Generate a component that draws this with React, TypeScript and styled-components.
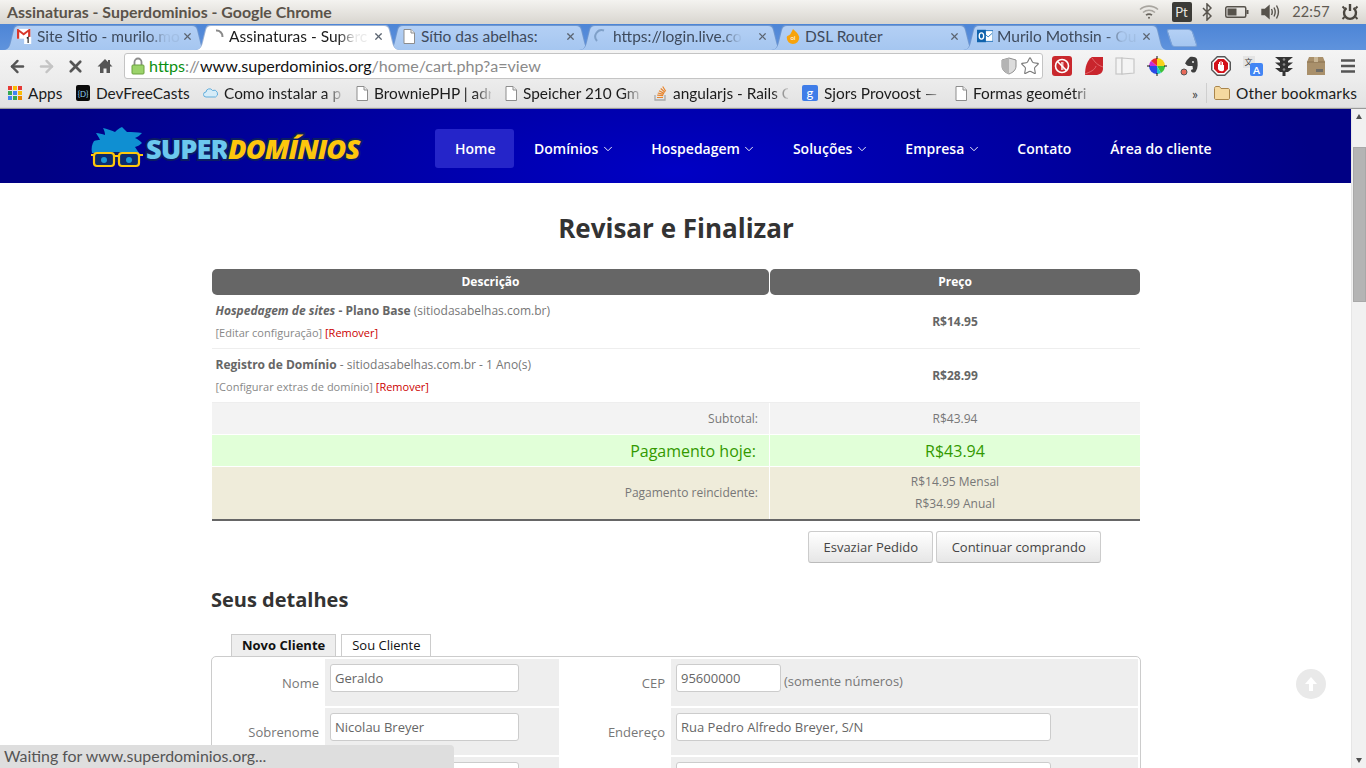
import React from 'react';
import styled, { createGlobalStyle } from 'styled-components';
import { ArrowLeft, ArrowRight, X, Star, ChevronDown } from 'lucide-react';

const GlobalStyle = createGlobalStyle`
  html, body { margin: 0; padding: 0; height: 768px; overflow: hidden; background: #fff; }
  * { box-sizing: border-box; }
`;

const UI_FONT = `Lato, "Noto Sans", sans-serif`;
const PAGE_FONT = `"Open Sans", "Noto Sans", sans-serif`;

/* ---------- janela ---------- */
const Screen = styled.div`
  position: relative;
  width: 1366px;
  height: 768px;
  overflow: hidden;
  display: flex;
  flex-direction: column;
  font-family: ${PAGE_FONT};
`;

const TitleBar = styled.div`
  height: 24px;
  flex: none;
  display: flex;
  align-items: center;
  padding: 0 7px 1px;
  background: linear-gradient(#f4f3f0, #d8d5cf);
  font: bold 15.9px ${UI_FONT};
  color: #5a534a;
`;

const Tray = styled.div`
  margin-left: auto;
  display: flex;
  align-items: center;
  height: 24px;
`;

const TraySlot = styled.span<{ $w: number }>`
  width: ${p => p.$w}px;
  display: flex;
  justify-content: center;
  align-items: center;
`;

const PtBadge = styled.span`
  width: 20px;
  height: 20px;
  background: #3c3b37;
  color: #e8e6e0;
  border-radius: 2px;
  display: flex;
  align-items: center;
  justify-content: center;
  font: 13px ${UI_FONT};
`;

const Clock = styled.span`
  font: 14.5px ${UI_FONT};
  color: #5f5a52;
`;

/* ---------- abas ---------- */
const TabStrip = styled.div`
  height: 26px;
  flex: none;
  display: flex;
  align-items: flex-end;
  padding-left: 3px;
  background: linear-gradient(#4d85d6, #5f93dd);
`;

const TAB_OUTER = `path('M0 25 C5 25 6 22 7 17 L10 5 C11 1 12 0 16 0 L189 0 C193 0 194 1 195 5 L198 17 C199 22 200 25 205 25 Z')`;
const TAB_INNER = `path('M1 25 C6 24 7 21 8 17 L11 5 C12 2 13 1 16 1 L189 1 C192 1 193 2 194 5 L197 17 C198 21 199 24 204 25 Z')`;

const Tab = styled.div<{ $active?: boolean }>`
  position: relative;
  width: 205px;
  height: 25px;
  margin-right: -13px;
  flex: none;
  clip-path: ${TAB_OUTER};
  background: ${p => (p.$active ? '#9db4d6' : '#6f97cf')};
  z-index: ${p => (p.$active ? 2 : 1)};
  font: 15.5px ${UI_FONT};
  color: ${p => (p.$active ? '#1c1c1c' : '#3e4a5c')};
  display: flex;
  align-items: center;
  padding: 0 15px 3px 14px;

  &::before {
    content: '';
    position: absolute;
    inset: 0;
    clip-path: ${TAB_INNER};
    background: ${p => (p.$active ? '#fff' : 'linear-gradient(#b4d0f5, #a5c6f0)')};
  }
  & > * { position: relative; }
`;

const TabIcon = styled.span`
  width: 16px;
  height: 16px;
  flex: none;
  display: flex;
  align-items: center;
  justify-content: center;
`;

const TabLabel = styled.span<{ $gap?: number; $fade?: boolean }>`
  flex: 1;
  margin-left: ${p => p.$gap ?? 4}px;
  white-space: nowrap;
  ${p => p.$fade && 'mask-image: linear-gradient(90deg, #000 78%, rgba(0,0,0,.1) 90%);'}
`;

const TabClose = styled.span`
  width: 14px;
  display: flex;
  justify-content: center;
  color: #5b6470;
  margin-left: 2px;
`;

const NewTab = styled.div`
  width: 26px;
  height: 18px;
  margin: 0 0 3px 14px;
  flex: none;
  background: linear-gradient(#b4d0f5, #a5c6f0);
  border: 1px solid #7ea3d6;
  border-radius: 3px 4px 3px 3px;
  transform: skewX(18deg);
`;

/* ---------- barra de ferramentas ---------- */
const Toolbar = styled.div`
  height: 31px;
  flex: none;
  display: flex;
  align-items: center;
  background: linear-gradient(#f4f4f4, #ececec);
  padding: 3px 0 2px 3px;
`;

const NavBtn = styled.span<{ $w?: number }>`
  width: ${p => p.$w ?? 29}px;
  display: flex;
  justify-content: center;
  align-items: center;
  flex: none;
`;

const Omnibox = styled.div`
  width: 919px;
  height: 26px;
  margin-left: 5px;
  flex: none;
  background: #fff;
  border: 1px solid #c4c4c4;
  border-radius: 3px;
  display: flex;
  align-items: center;
  padding: 0 2px 0 6px;
  font: 16.13px ${UI_FONT};
`;

const Scheme = styled.span`color: #0b8f12;`;
const UrlDim = styled.span`color: #8a8a8a;`;
const UrlHost = styled.span`color: #111;`;

const UrlText = styled.span`
  margin-left: 4px;
  margin-top: -2px;
  white-space: nowrap;
`;

const OmniRight = styled.span`
  margin-left: auto;
  display: flex;
  align-items: center;
  gap: 3px;
`;

const Extensions = styled.div`
  display: flex;
  align-items: center;
  margin-left: 3px;
`;

const ExtSlot = styled.span`
  width: 31.8px;
  height: 24px;
  flex: none;
  display: flex;
  justify-content: center;
  align-items: center;
`;

/* ---------- favoritos ---------- */
const BookmarksBar = styled.div`
  height: 28px;
  flex: none;
  display: flex;
  align-items: center;
  gap: 14px;
  padding: 0 8px 3px;
  background: linear-gradient(#ececec, #e2e2e2);
  border-bottom: 1px solid #9a9a9a;
  font: 15.4px ${UI_FONT};
  color: #1c1c1c;
  box-shadow: inset 0 -1px 0 #d6d6d6;
`;

const Bookmark = styled.span`
  display: flex;
  align-items: center;
  gap: 6px;
  flex: none;
`;

const BookmarkText = styled.span<{ $w: number; $fade?: boolean; $track?: number }>`
  width: ${p => p.$w}px;
  white-space: nowrap;
  letter-spacing: ${p => p.$track ?? 0}px;
  ${p => p.$fade && 'mask-image: linear-gradient(90deg, #000 86%, rgba(0,0,0,.15));'}
`;

const BookmarkEnd = styled.span`
  margin-left: auto;
  display: flex;
  align-items: center;
`;

const Chevrons = styled.span`
  font: 14px ${UI_FONT};
  color: #444;
  margin-right: 8px;
`;

const BarSeparator = styled.span`
  width: 1px;
  height: 20px;
  background: #cfcfcf;
  margin-right: 7px;
`;

/* ---------- area da pagina ---------- */
const Viewport = styled.div`
  flex: 1;
  min-height: 0;
  display: flex;
`;

const Page = styled.div`
  flex: 1;
  min-width: 0;
  overflow: hidden;
  background: #fff;
`;

const Scrollbar = styled.div`
  width: 15px;
  flex: none;
  display: flex;
  flex-direction: column;
  align-items: center;
  background: #f1f1f1;
  border-left: 1px solid #e6e6e6;
`;

const ScrollArrow = styled.span<{ $down?: boolean }>`
  width: 0;
  height: 0;
  border-left: 3.5px solid transparent;
  border-right: 3.5px solid transparent;
  ${p => (p.$down ? 'border-top: 5px solid #505050; margin-top: auto; margin-bottom: 5px;' : 'border-bottom: 5px solid #505050; margin-top: 5px;')}
`;

const ScrollThumb = styled.span`
  width: 13px;
  height: 155px;
  margin-top: 28px;
  background: #b4b4b4;
  border: 1px solid #a8a8a8;
`;

/* ---------- cabecalho do site ---------- */
const SiteHeader = styled.header`
  height: 74px;
  display: flex;
  align-items: center;
  padding: 5px 0 0 91px;
  background: radial-gradient(ellipse 640px 190px at 50% 85%, #0000c4, #000084);
`;

const Logo = styled.div`
  width: 270px;
  height: 44px;
  flex: none;
  display: flex;
  align-items: center;
  gap: 3px;
`;

const LogoWord = styled.span<{ $accent?: boolean }>`
  font: ${p => (p.$accent ? 'italic 800 27.2px' : '800 27.2px')} ${PAGE_FONT};
  color: ${p => (p.$accent ? '#fdc70c' : '#6cc8ee')};
  -webkit-text-stroke: 4px #0b1c63;
  paint-order: stroke fill;
  letter-spacing: -0.95px;
`;

const LogoText = styled.span`
  display: flex;
  white-space: nowrap;
`;

const HeroMark = styled.svg`
  flex: none;
  margin-top: -3px;
`;

const Nav = styled.nav`
  display: flex;
  align-items: center;
  margin-left: 74px;
`;

const NavItem = styled.a<{ $active?: boolean }>`
  height: 39px;
  padding: 0 ${p => (p.$active ? 18.5 : 19)}px 0 20px;
  display: flex;
  align-items: center;
  gap: 2.5px;
  border-radius: 3px;
  color: #fff;
  font-size: 14px;
  font-weight: 600;
  background: ${p => (p.$active ? '#2525c9' : 'transparent')};
  white-space: nowrap;
  svg { margin-right: -2.5px; }
`;

/* ---------- conteudo ---------- */
const Content = styled.main`
  width: 930px;
  margin-left: 211px;
`;

const PageTitle = styled.h1`
  margin: 0;
  padding-top: 28px;
  height: 86px;
  text-align: center;
  font-size: 26px;
  line-height: 35px;
  font-weight: 700;
  color: #333;
`;

const CartTable = styled.div`
  margin: 0 1px;
  font-size: 12px;
  color: #777;
`;

const CartRow = styled.div<{ $line?: boolean; $end?: boolean; $offset?: boolean }>`
  display: grid;
  grid-template-columns: 557px 1fr;
  column-gap: 1px;
  ${p => p.$line && 'border-bottom: 1px solid #eee;'}
  ${p => p.$end && 'border-bottom: 2px solid #666;'}
  ${p => p.$offset && 'margin-top: 1px;'}
`;

const HeadCell = styled.div`
  height: 26px;
  padding-bottom: 2px;
  display: flex;
  align-items: center;
  justify-content: center;
  background: #666;
  color: #fff;
  font-weight: 700;
  border-radius: 5px;
`;

type Tone = 'plain' | 'sub' | 'today' | 'recur';
const TONES: Record<Tone, string> = {
  plain: '#fff',
  sub: '#f3f3f3',
  today: '#e1ffd8',
  recur: '#efecda',
};

const DescCell = styled.div<{ $tone: Tone; $h: number }>`
  height: ${p => p.$h}px;
  background: ${p => TONES[p.$tone]};
  padding: 5px 3px 0 3.500px;
`;

const TotalLabel = styled.div<{ $tone: Tone; $h: number; $big?: boolean; $lift?: boolean }>`
  height: ${p => p.$h}px;
  background: ${p => TONES[p.$tone]};
  display: flex;
  align-items: center;
  justify-content: flex-end;
  padding-right: ${p => (p.$big ? 13 : 11)}px;
  ${p => p.$lift && 'padding-bottom: 2px;'}
  ${p => p.$big && 'font-size: 16px; color: #339900;'}
`;

const PriceCell = styled.div<{ $tone: Tone; $h: number; $big?: boolean; $bold?: boolean }>`
  height: ${p => p.$h}px;
  background: ${p => TONES[p.$tone]};
  display: flex;
  flex-direction: column;
  align-items: center;
  justify-content: center;
  line-height: 22px;
  ${p => p.$big && 'font-size: 16px; color: #339900;'}
  ${p => p.$bold && 'font-weight: 700; color: #666;'}
`;

const ItemLine = styled.div`
  line-height: 21px;
  color: #777;
`;

const ItemStrong = styled.b`color: #666;`;

const ItemLinks = styled.div`
  font-size: 11px;
  line-height: 18px;
  margin-top: 3px;
  color: #888;
`;

const RemoveLink = styled.span`color: #cc0000;`;

const CartActions = styled.div`
  display: flex;
  justify-content: flex-end;
  gap: 3px;
  padding: 10px 40px 0 0;
`;

const PlainButton = styled.button`
  height: 32px;
  padding: 0 14.3px;
  background: linear-gradient(#fff, #e6e6e6);
  border: 1px solid #ccc;
  border-bottom-color: #bbb;
  border-radius: 3px;
  color: #444;
  font: 13px ${PAGE_FONT};
`;

const SectionTitle = styled.h2`
  margin: 23px 0 0;
  height: 48px;
  font-size: 20px;
  line-height: 27px;
  font-weight: 700;
  color: #333;
`;

const CustomerTabs = styled.div`
  display: flex;
  gap: 5px;
  padding-left: 20px;
  height: 22px;
`;

const CustomerTab = styled.div<{ $active?: boolean }>`
  border: 1px solid #ccc;
  border-bottom: 0;
  height: 22px;
  padding: 1px 10px 0;
  font-size: 13px;
  font-weight: ${p => (p.$active ? 700 : 400)};
  background: ${p => (p.$active ? '#eee' : '#fff')};
  color: #111;
`;

const FormPanel = styled.div`
  border: 1px solid #ccc;
  border-radius: 5px;
  padding: 2px;
  display: grid;
  grid-template-columns: 111px 234px 112px 467px;
  grid-auto-rows: 47px;
  row-gap: 2px;
  font-size: 13px;
  color: #777;
`;

const FieldLabel = styled.div`
  display: flex;
  align-items: center;
  justify-content: flex-end;
  padding-right: 6px;
`;

const FieldCell = styled.div`
  background: #eee;
  padding: 5px;
  display: flex;
  align-items: flex-start;
  gap: 3px;
`;

const FieldInput = styled.input<{ $w: number }>`
  width: ${p => p.$w}px;
  height: 28px;
  border: 1px solid #ccc;
  border-radius: 3px;
  background: #fff;
  padding: 0 4px;
  color: #666;
  font: 13px ${PAGE_FONT};
`;

const FieldHint = styled.span`
  line-height: 34px;
`;

/* ---------- sobreposicoes ---------- */
const StatusBubble = styled.div`
  position: absolute;
  left: 0;
  bottom: 0;
  width: 454px;
  height: 23px;
  padding: 0 4px 2px;
  display: flex;
  align-items: center;
  background: #dedede;
  border-top-right-radius: 4px;
  color: #555;
  font: 15.9px ${UI_FONT};
`;

const BackToTop = styled.div`
  position: absolute;
  left: 1296px;
  top: 669px;
  width: 30px;
  height: 30px;
  border-radius: 50%;
  background: #e9e9e9;
  display: flex;
  align-items: center;
  justify-content: center;
`;

/* ---------- desenhos ---------- */
const DocIcon = () => (
  <svg width="12" height="15" viewBox="0 0 12 15">
    <path d="M1 .5h7l3.5 3.5v10.5H1z" fill="#fff" stroke="#8d8d8d" />
    <path d="M8 .5V4h3.5" fill="#eee" stroke="#8d8d8d" />
  </svg>
);

const Spinner = ({ color }: { color: string }) => (
  <svg width="16" height="16" viewBox="0 0 16 16">
    <path d="M7 2.5A6 6 0 0 1 13.5 9" fill="none" stroke={color} strokeWidth="2" />
  </svg>
);

const GrayMoon = () => (
  <svg width="16" height="16" viewBox="0 0 16 16">
    <path d="M11 2.5A6.5 6.5 0 0 0 4 13" fill="none" stroke="#7fa0c8" strokeWidth="2" />
  </svg>
);

const GmailIcon = () => (
  <svg width="18" height="18" viewBox="0 0 18 18">
    <rect x="0" y="1" width="15" height="11" fill="#fff" />
    <path d="M0 1v11h2.5V4.6L7.5 8.5l5-3.9V12H15V1h-1.5l-6 4.7L1.500 1z" fill="#d9372b" />
    <rect x="8" y="10" width="8" height="8" fill="#fff" />
    <path d="M11 11.500l1.500-1V17" stroke="#111" strokeWidth="1.200" fill="none" />
  </svg>
);

const OiIcon = () => (
  <svg width="18" height="18" viewBox="0 0 18 18">
    <path d="M9 1c3 3 7 6 7 10a7 7 0 0 1-14 0C2 8 4 9 6 7c1-2 2-4 3-6z" fill="#f7a30c" />
    <text x="9" y="14" fontSize="7" fill="#fff" textAnchor="middle" fontFamily="Lato, sans-serif">oi</text>
  </svg>
);

const OutlookIcon = () => (
  <svg width="18" height="16" viewBox="0 0 18 16">
    <rect x="7" y="2" width="11" height="12" fill="#fff" stroke="#1a6fba" />
    <path d="M8 5l4.500 4L17 5" fill="none" stroke="#1a6fba" />
    <rect x="0" y="1" width="10" height="14" fill="#0f62ac" />
    <ellipse cx="5" cy="8" rx="2.500" ry="3.500" fill="none" stroke="#fff" strokeWidth="1.500" />
  </svg>
);

const HomeIcon = () => (
  <svg width="16" height="16" viewBox="0 0 16 16">
    <path d="M8 1L0.500 8.500h2.500V15h3.500v-4.500h3V15H13V8.500h2.500L13 6V2h-2v2z" fill="#555" />
  </svg>
);

const LockIcon = () => (
  <svg width="14" height="18" viewBox="0 0 14 18">
    <path d="M3.500 8V5a3.500 3.500 0 0 1 7 0v3" fill="none" stroke="#8c8c8c" strokeWidth="1.800" />
    <rect x="1" y="8" width="12" height="9" rx="1" fill="#9bd36a" stroke="#6aa13e" />
  </svg>
);

const ShieldIcon = () => (
  <svg width="16" height="18" viewBox="0 0 16 18">
    <path d="M8 1l7 2v6c0 4-3 6.500-7 8-4-1.500-7-4-7-8V3z" fill="#dcdcdc" stroke="#8e8e8e" />
    <path d="M8 1v16c-4-1.500-7-4-7-8V3z" fill="#b4b4b4" />
  </svg>
);

const HamburgerIcon = () => (
  <svg width="14" height="14" viewBox="0 0 14 14">
    <path d="M0 1.500h14M0 7h14M0 12.500h14" stroke="#555" strokeWidth="2.600" />
  </svg>
);

const WifiIcon = () => (
  <svg width="20" height="16" viewBox="0 0 20 16" fill="none" stroke="#a8a59f" strokeWidth="1.600">
    <path d="M1 5.500c5-4.500 13-4.500 18 0" />
    <path d="M4 8.500c3.500-3 8.500-3 12 0" />
    <path d="M7 11.200c2-1.500 4-1.500 6 0" stroke="#67635c" />
    <circle cx="10" cy="13.800" r="1" fill="#67635c" stroke="none" />
  </svg>
);

const BluetoothIcon = () => (
  <svg width="10" height="18" viewBox="0 0 10 18" fill="none" stroke="#57534c" strokeWidth="1.500">
    <path d="M1 5l8 8-4 4V1l4 4-8 8" />
  </svg>
);

const BatteryIcon = () => (
  <svg width="24" height="14" viewBox="0 0 24 14">
    <rect x="0.750" y="1.750" width="20" height="10.500" rx="1.500" fill="none" stroke="#57534c" strokeWidth="1.500" />
    <rect x="2.500" y="3.500" width="9" height="7" fill="#57534c" />
    <rect x="21.500" y="5" width="2" height="4" fill="#57534c" />
  </svg>
);

const VolumeIcon = () => (
  <svg width="20" height="16" viewBox="0 0 20 16" fill="none" stroke="#57534c" strokeWidth="1.400">
    <path d="M1 5.500h3L8 2v12l-4-3.500H1z" fill="#57534c" />
    <path d="M10.500 5c1 2 1 4 0 6M13 3.500c1.600 3 1.600 6 0 9M15.500 1.500c2.400 4 2.400 9 0 13" />
  </svg>
);

const PowerIcon = () => (
  <svg width="18" height="18" viewBox="0 0 18 18" fill="none" stroke="#4a463f" strokeWidth="2.400">
    <path d="M5.500 5a6 6 0 1 0 7 0" />
    <path d="M9 1v7" />
    <path d="M1.500 3.500l2 2M16.500 3.500l-2 2M1.500 16l2-2M16.500 16l-2-2" strokeWidth="1.800" />
  </svg>
);

const EXTENSIONS: React.ReactNode[] = [
  <svg key="a" width="20" height="20" viewBox="0 0 20 20">
    <rect width="20" height="20" rx="3" fill="#c9282d" />
    <circle cx="10" cy="10" r="6.500" fill="none" stroke="#fff" strokeWidth="1.600" />
    <path d="M5.500 5.500l9 9" stroke="#fff" strokeWidth="1.600" />
    <path d="M9 6h2.500v8H9z" fill="#fff" opacity=".7" />
  </svg>,
  <svg key="b" width="20" height="20" viewBox="0 0 20 20">
    <path d="M8 1h11v11c0 4-2 6-6 7H1c0-8 2-15 7-18z" fill="#c9252d" />
    <path d="M8 2c3 4 5 7 11 9M1 18c5-2 10-4 11-8" stroke="#e9787c" strokeWidth=".8" fill="none" />
  </svg>,
  <svg key="c" width="20" height="20" viewBox="0 0 20 20" fill="#f4f4f4" stroke="#c6c6c6" strokeWidth="1.200">
    <rect x="1" y="2" width="6" height="16" />
    <path d="M7 2l12 1v14L7 18z" />
  </svg>,
  <svg key="d" width="20" height="20" viewBox="0 0 20 20">
    <circle cx="10" cy="10" r="8" fill="#ffffff" />
    <path d="M10 10V2a8 8 0 0 1 8 8z" fill="#f7d21b" />
    <path d="M10 10h8a8 8 0 0 1-4 6.900z" fill="#3bc23b" />
    <path d="M10 10l4 6.900A8 8 0 0 1 10 18z" fill="#1fc7c7" />
    <path d="M10 10v8a8 8 0 0 1-8-8z" fill="#2a49e6" />
    <path d="M10 10H2a8 8 0 0 1 2-5.300z" fill="#c92ad6" />
    <path d="M10 10L4 4.700A8 8 0 0 1 10 2z" fill="#ea2a2a" />
    <path d="M10 0v20M0 10h20" stroke="#111" strokeWidth="1" strokeDasharray="3 14 3" />
  </svg>,
  <svg key="e" width="20" height="20" viewBox="0 0 20 20">
    <path d="M8 4l3-3c3-.5 6 0 7 2 1 4 1 9-1 12-1 2-4 2-5 0 0-1 1-2 2-1.500l-.5-3.500H10C8 10 7 8 6 7.500z" fill="#3d3d3d" />
    <circle cx="14" cy="6" r=".9" fill="#fff" />
    <circle cx="5" cy="16" r="3" fill="#e86a5a" stroke="#555" />
  </svg>,
  <svg key="f" width="20" height="20" viewBox="0 0 20 20">
    <path d="M6 0h8l6 6v8l-6 6H6l-6-6V6z" fill="#555" />
    <path d="M6.500 1.500h7l5 5v7l-5 5h-7l-5-5v-7z" fill="#fff" />
    <path d="M7 3h6l4 4v6l-4 4H7l-4-4V7z" fill="#d3121a" />
    <path d="M7 13V8h1V6h1v3h.5V5h1v4h.5V6h1v3h1v5c-1 2-5 1.500-6-1z" fill="#fff" />
  </svg>,
  <svg key="g" width="20" height="20" viewBox="0 0 20 20">
    <rect x="0" y="0" width="12" height="12" fill="#e4e4e4" />
    <text x="5.500" y="9" fontSize="8" textAnchor="middle" fill="#444" fontFamily='"Noto Sans CJK SC", sans-serif'>文</text>
    <rect x="7" y="7" width="13" height="13" rx="2" fill="#4285f4" />
    <text x="13.500" y="17.500" fontSize="10" fontWeight="700" textAnchor="middle" fill="#fff" fontFamily="Lato, sans-serif">A</text>
  </svg>,
  <svg key="h" width="18" height="20" viewBox="0 0 18 20">
    <rect x="5" y="1" width="8" height="15" rx="1" fill="#333" />
    <path d="M0 1h18l-5 4H5zM0 6.500h18l-5 4H5zM0 12h18l-5 4H5z" fill="#333" />
    <rect x="7.500" y="16" width="3" height="4" fill="#333" />
    <circle cx="9" cy="3.500" r="1.300" fill="#888" />
    <circle cx="9" cy="8.500" r="1.300" fill="#888" />
    <circle cx="9" cy="13.500" r="1.300" fill="#888" />
  </svg>,
  <svg key="i" width="20" height="20" viewBox="0 0 20 20">
    <path d="M3 1h14l2 5v13H1V6z" fill="#a9906b" />
    <path d="M1 6h18" stroke="#8a7352" />
    <path d="M8 1h4v5H8z" fill="#c9b695" />
    <rect x="10" y="13" width="7" height="3" fill="#6f6c66" />
  </svg>,
];

const AppsIcon = () => (
  <svg width="14" height="14" viewBox="0 0 14 14">
    {[0, 5, 10].map((y, r) =>
      [0, 5, 10].map((x, c) => (
        <rect key={`${r}${c}`} x={x} y={y} width="4" height="4"
          fill={[['#e53935', '#fbbc05', '#e53935'], ['#34a853', '#4285f4', '#fbbc05'], ['#4285f4', '#34a853', '#ea8600']][r][c]} />
      ))
    )}
  </svg>
);

const DevIcon = () => (
  <svg width="14" height="16" viewBox="0 0 14 16">
    <rect width="14" height="16" rx="2" fill="#0a0a0a" />
    <text x="7" y="11.500" fontSize="8" fill="#8fd0f5" textAnchor="middle" fontFamily="Lato, sans-serif">{'{D}'}</text>
  </svg>
);

const CloudIcon = () => (
  <svg width="15" height="10" viewBox="0 0 15 10">
    <path d="M3 9a2.500 2.500 0 0 1 0-5 3.500 3.500 0 0 1 6.500-1.500A3 3 0 0 1 12.500 9z" fill="#d6ecf8" stroke="#63aedc" />
  </svg>
);

const StackIcon = () => (
  <svg width="13" height="16" viewBox="0 0 13 16">
    <path d="M1 10v5h10v-5" fill="none" stroke="#a9a9a9" strokeWidth="1.300" />
    <path d="M3 12.500h6M3.200 10.200l6 .5M3.800 8l5.800 1.400M5 5.800l5.200 2.600M6.700 3.500l4.300 3.800M8.700 1.500l3 4.700" stroke="#e8842c" strokeWidth="1.200" />
  </svg>
);

const GoogleBookmark = () => (
  <svg width="16" height="16" viewBox="0 0 16 16">
    <rect width="16" height="16" rx="2" fill="#3f7de8" />
    <text x="8" y="12.500" fontSize="13" fill="#fff" textAnchor="middle" fontFamily="Lato, sans-serif">g</text>
  </svg>
);

const FolderIcon = () => (
  <svg width="16" height="14" viewBox="0 0 16 14">
    <path d="M.5 2.500c0-1 .5-2 1.500-2h3.500l1.500 2h7c1 0 1.500.5 1.500 1.500v8c0 1-.5 1.500-1.500 1.500H2c-1 0-1.500-.5-1.500-1.500z" fill="#f5d9a0" stroke="#a9854c" />
  </svg>
);

const HeroLogo = () => (
  <HeroMark width="52" height="42" viewBox="0 0 52 42">
    <path d="M1 27C0 22 1 18 3 15c2-1 4-1 6-1C8 11 6 9 5 7c3 0 6 1 9 2 0-3-1-5-2-7 4 1 8 2 12 4 2-2 4-4 7-5l5 5c5 0 10 0 15 1-2 2-4 4-7 5 3 1 5 3 7 5-2 2-4 3-7 4l4 6z" fill="#0f8fd2" />
    <path d="M8 26h36v10H8z" fill="#0b1c63" />
    <g fill="#0b2b70" stroke="#fdc70c" strokeWidth="2.200">
      <rect x="3" y="27" width="20" height="13" rx="3" />
      <rect x="28" y="27" width="20" height="13" rx="3" />
    </g>
    <path d="M23 30h5M0 29h3M48 29h4" stroke="#fdc70c" strokeWidth="2.200" />
    <circle cx="13" cy="34" r="3" fill="#1a97d8" />
    <circle cx="38" cy="34" r="3" fill="#1a97d8" />
  </HeroMark>
);

const TABS: { icon: React.ReactNode; label: string; active?: boolean; fade?: boolean }[] = [
  { icon: <GmailIcon />, label: 'Site SItio - murilo.mo', fade: true },
  { icon: <Spinner color="#8a8a8a" />, label: 'Assinaturas - Superc', active: true, fade: true },
  { icon: <DocIcon />, label: 'Sítio das abelhas:' },
  { icon: <GrayMoon />, label: 'https://login.live.co', fade: true },
  { icon: <OiIcon />, label: 'DSL Router' },
  { icon: <OutlookIcon />, label: 'Murilo Mothsin - Ou', fade: true },
];

const NAV_ITEMS: { label: string; menu?: boolean; active?: boolean }[] = [
  { label: 'Home', active: true },
  { label: 'Domínios', menu: true },
  { label: 'Hospedagem', menu: true },
  { label: 'Soluções', menu: true },
  { label: 'Empresa', menu: true },
  { label: 'Contato' },
  { label: 'Área do cliente' },
];

const BOOKMARKS: { icon: React.ReactNode; label: string; w: number; fade?: boolean }[] = [
  { icon: <AppsIcon />, label: 'Apps', w: 34 },
  { icon: <DevIcon />, label: 'DevFreeCasts', w: 93 },
  { icon: <CloudIcon />, label: 'Como instalar a p', w: 118, fade: true },
  { icon: <DocIcon />, label: 'BrowniePHP | adr', w: 117, fade: true },
  { icon: <DocIcon />, label: 'Speicher 210 Gmb', w: 117, fade: true },
  { icon: <StackIcon />, label: 'angularjs - Rails C', w: 115, fade: true },
  { icon: <GoogleBookmark />, label: 'Sjors Provoost —', w: 117, fade: true },
  { icon: <DocIcon />, label: 'Formas geométri', w: 117, fade: true },
];

export default function App() {
  return (
    <Screen>
      <GlobalStyle />
      <TitleBar>
        Assinaturas - Superdominios - Google Chrome
        <Tray>
          <TraySlot $w={26}><WifiIcon /></TraySlot>
          <TraySlot $w={39}><PtBadge>Pt</PtBadge></TraySlot>
          <TraySlot $w={12}><BluetoothIcon /></TraySlot>
          <TraySlot $w={48}><BatteryIcon /></TraySlot>
          <TraySlot $w={20}><VolumeIcon /></TraySlot>
          <TraySlot $w={60}><Clock>22:57</Clock></TraySlot>
          <TraySlot $w={18}><PowerIcon /></TraySlot>
        </Tray>
      </TitleBar>

      <TabStrip>
        {TABS.map(t => (
          <Tab key={t.label} $active={t.active}>
            <TabIcon>{t.icon}</TabIcon>
            <TabLabel $fade={t.fade}>{t.label}</TabLabel>
            <TabClose><X size={11} strokeWidth={2.6} /></TabClose>
          </Tab>
        ))}
        <NewTab />
      </TabStrip>

      <Toolbar>
        <NavBtn><ArrowLeft size={19} strokeWidth={3} color="#555" /></NavBtn>
        <NavBtn><ArrowRight size={19} strokeWidth={3} color="#c4c4c4" /></NavBtn>
        <NavBtn><X size={19} strokeWidth={3.400} color="#555" /></NavBtn>
        <NavBtn><HomeIcon /></NavBtn>
        <Omnibox>
          <LockIcon />
          <UrlText>
            <Scheme>https</Scheme><UrlDim>://</UrlDim><UrlHost>www.superdominios.org</UrlHost><UrlDim>/home/cart.php?a=view</UrlDim>
          </UrlText>
          <OmniRight>
            <ShieldIcon />
            <Star size={20} strokeWidth={1.300} color="#777" />
          </OmniRight>
        </Omnibox>
        <Extensions>
          {EXTENSIONS.map((icon, i) => <ExtSlot key={i}>{icon}</ExtSlot>)}
          <ExtSlot><HamburgerIcon /></ExtSlot>
        </Extensions>
      </Toolbar>

      <BookmarksBar>
        {BOOKMARKS.map(b => (
          <Bookmark key={b.label}>
            {b.icon}
            <BookmarkText $w={b.w} $fade={b.fade}>{b.label}</BookmarkText>
          </Bookmark>
        ))}
        <BookmarkEnd>
          <Chevrons>»</Chevrons>
          <BarSeparator />
          <Bookmark>
            <FolderIcon />
            <BookmarkText $w={122} $track={0.2}>Other bookmarks</BookmarkText>
          </Bookmark>
        </BookmarkEnd>
      </BookmarksBar>

      <Viewport>
        <Page>
          <SiteHeader>
            <Logo>
              <HeroLogo />
              <LogoText>
                <LogoWord>SUPER</LogoWord>
                <LogoWord $accent>DOMÍNIOS</LogoWord>
              </LogoText>
            </Logo>
            <Nav>
              {NAV_ITEMS.map(item => (
                <NavItem key={item.label} $active={item.active}>
                  {item.label}
                  {item.menu && <ChevronDown size={14} strokeWidth={1.6} />}
                </NavItem>
              ))}
            </Nav>
          </SiteHeader>

          <Content>
            <PageTitle>Revisar e Finalizar</PageTitle>

            <CartTable>
              <CartRow>
                <HeadCell>Descrição</HeadCell>
                <HeadCell>Preço</HeadCell>
              </CartRow>
              <CartRow $line>
                <DescCell $tone="plain" $h={53}>
                  <ItemLine><ItemStrong><i>Hospedagem de sites</i> - Plano Base</ItemStrong> (sitiodasabelhas.com.br)</ItemLine>
                  <ItemLinks>[Editar configuração] <RemoveLink>[Remover]</RemoveLink></ItemLinks>
                </DescCell>
                <PriceCell $tone="plain" $h={53} $bold>R$14.95</PriceCell>
              </CartRow>
              <CartRow $line>
                <DescCell $tone="plain" $h={53}>
                  <ItemLine><ItemStrong>Registro de Domínio</ItemStrong> - sitiodasabelhas.com.br - 1 Ano(s)</ItemLine>
                  <ItemLinks>[Configurar extras de domínio] <RemoveLink>[Remover]</RemoveLink></ItemLinks>
                </DescCell>
                <PriceCell $tone="plain" $h={53} $bold>R$28.99</PriceCell>
              </CartRow>
              <CartRow>
                <TotalLabel $tone="sub" $h={31}>Subtotal:</TotalLabel>
                <PriceCell $tone="sub" $h={31}>R$43.94</PriceCell>
              </CartRow>
              <CartRow $offset>
                <TotalLabel $tone="today" $h={31} $big>Pagamento hoje:</TotalLabel>
                <PriceCell $tone="today" $h={31} $big>R$43.94</PriceCell>
              </CartRow>
              <CartRow $end $offset>
                <TotalLabel $tone="recur" $h={52} $lift>Pagamento reincidente:</TotalLabel>
                <PriceCell $tone="recur" $h={52}>
                  <span>R$14.95 Mensal</span>
                  <span>R$34.99 Anual</span>
                </PriceCell>
              </CartRow>
            </CartTable>

            <CartActions>
              <PlainButton>Esvaziar Pedido</PlainButton>
              <PlainButton>Continuar comprando</PlainButton>
            </CartActions>

            <SectionTitle>Seus detalhes</SectionTitle>
            <CustomerTabs>
              <CustomerTab $active>Novo Cliente</CustomerTab>
              <CustomerTab>Sou Cliente</CustomerTab>
            </CustomerTabs>
            <FormPanel>
              <FieldLabel>Nome</FieldLabel>
              <FieldCell><FieldInput $w={189} defaultValue="Geraldo" /></FieldCell>
              <FieldLabel>CEP</FieldLabel>
              <FieldCell>
                <FieldInput $w={105} defaultValue="95600000" />
                <FieldHint>(somente números)</FieldHint>
              </FieldCell>
              <FieldLabel>Sobrenome</FieldLabel>
              <FieldCell><FieldInput $w={189} defaultValue="Nicolau Breyer" /></FieldCell>
              <FieldLabel>Endereço</FieldLabel>
              <FieldCell><FieldInput $w={375} defaultValue="Rua Pedro Alfredo Breyer, S/N" /></FieldCell>
              <FieldLabel />
              <FieldCell><FieldInput $w={189} /></FieldCell>
              <FieldLabel />
              <FieldCell><FieldInput $w={375} /></FieldCell>
            </FormPanel>
          </Content>
        </Page>
        <Scrollbar>
          <ScrollArrow />
          <ScrollThumb />
          <ScrollArrow $down />
        </Scrollbar>
      </Viewport>

      <BackToTop>
        <svg width="16" height="18" viewBox="0 0 16 18">
          <path d="M8 2L2 9h4v7h4V9h4z" fill="#fff" />
        </svg>
      </BackToTop>
      <StatusBubble>Waiting for www.superdominios.org...</StatusBubble>
    </Screen>
  );
}
